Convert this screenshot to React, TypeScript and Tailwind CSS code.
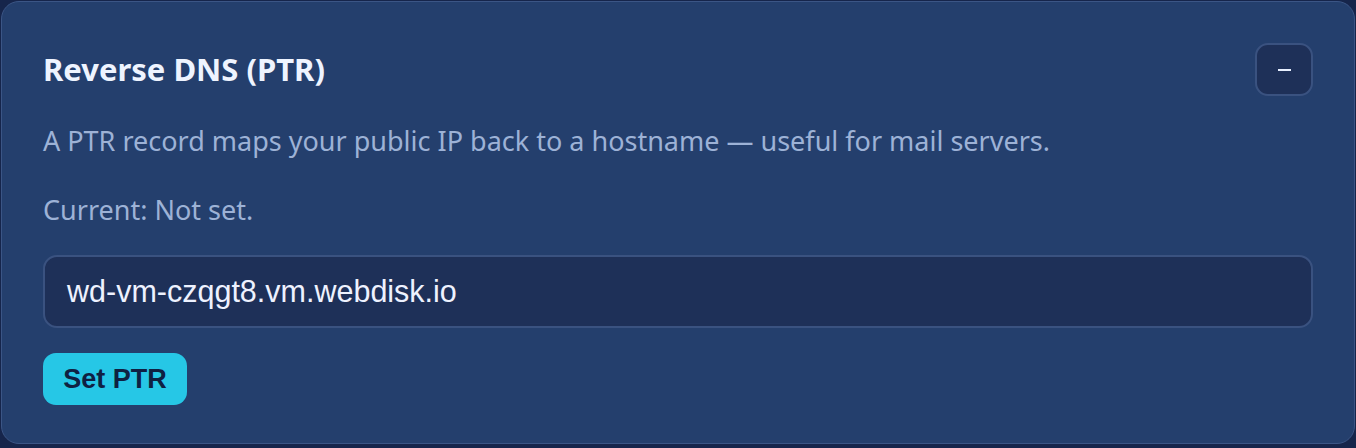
import React from "react";

export default function App() {
  return (
    <div className="w-[1356px] h-[448px] bg-[#16254b] pt-px pl-px">
      <div
        className="w-[1354px] h-[443px] rounded-[18px] border border-[#3b5585] bg-[#243f6d] px-[41px] pt-[41px]"
        style={{ fontFamily: '"Noto Sans", "Open Sans", sans-serif' }}
      >
        <div className="flex items-center justify-between h-[53px]">
          <h2 className="text-[31px] font-bold text-[#eef4ff] leading-none">Reverse DNS (PTR)</h2>
          <button className="w-[58px] h-[53px] rounded-[13px] border-2 border-[#3a5280] bg-[#1e3058] flex items-center justify-center">
            <span className="block w-[13px] h-[2px] bg-[#e8f0ff]" />
          </button>
        </div>
        <p className="mt-[27px] text-[27px] leading-[36px] text-[#9db2d6]">
          A PTR record maps your public IP back to a hostname — useful for mail servers.
        </p>
        <p className="mt-[33px] text-[27px] leading-[36px] text-[#9db2d6]">Current: Not set.</p>
        <div
          className="mt-[27px] h-[73px] rounded-[14px] border-2 border-[#3a5280] bg-[#1e3058] flex items-center pl-[22px] text-[30.5px] text-[#eef2ff]"
          style={{ fontFamily: '"Liberation Sans", Arial, sans-serif' }}
        >
          wd-vm-czqgt8.vm.webdisk.io
        </div>
        <button
          className="mt-[25px] h-[52px] w-[144px] rounded-[13px] bg-[#26c7e6] text-[27px] font-bold text-[#0f2142] flex items-center justify-center"
          style={{ fontFamily: '"Liberation Sans", Arial, sans-serif' }}
        >
          Set PTR
        </button>
      </div>
    </div>
  );
}
